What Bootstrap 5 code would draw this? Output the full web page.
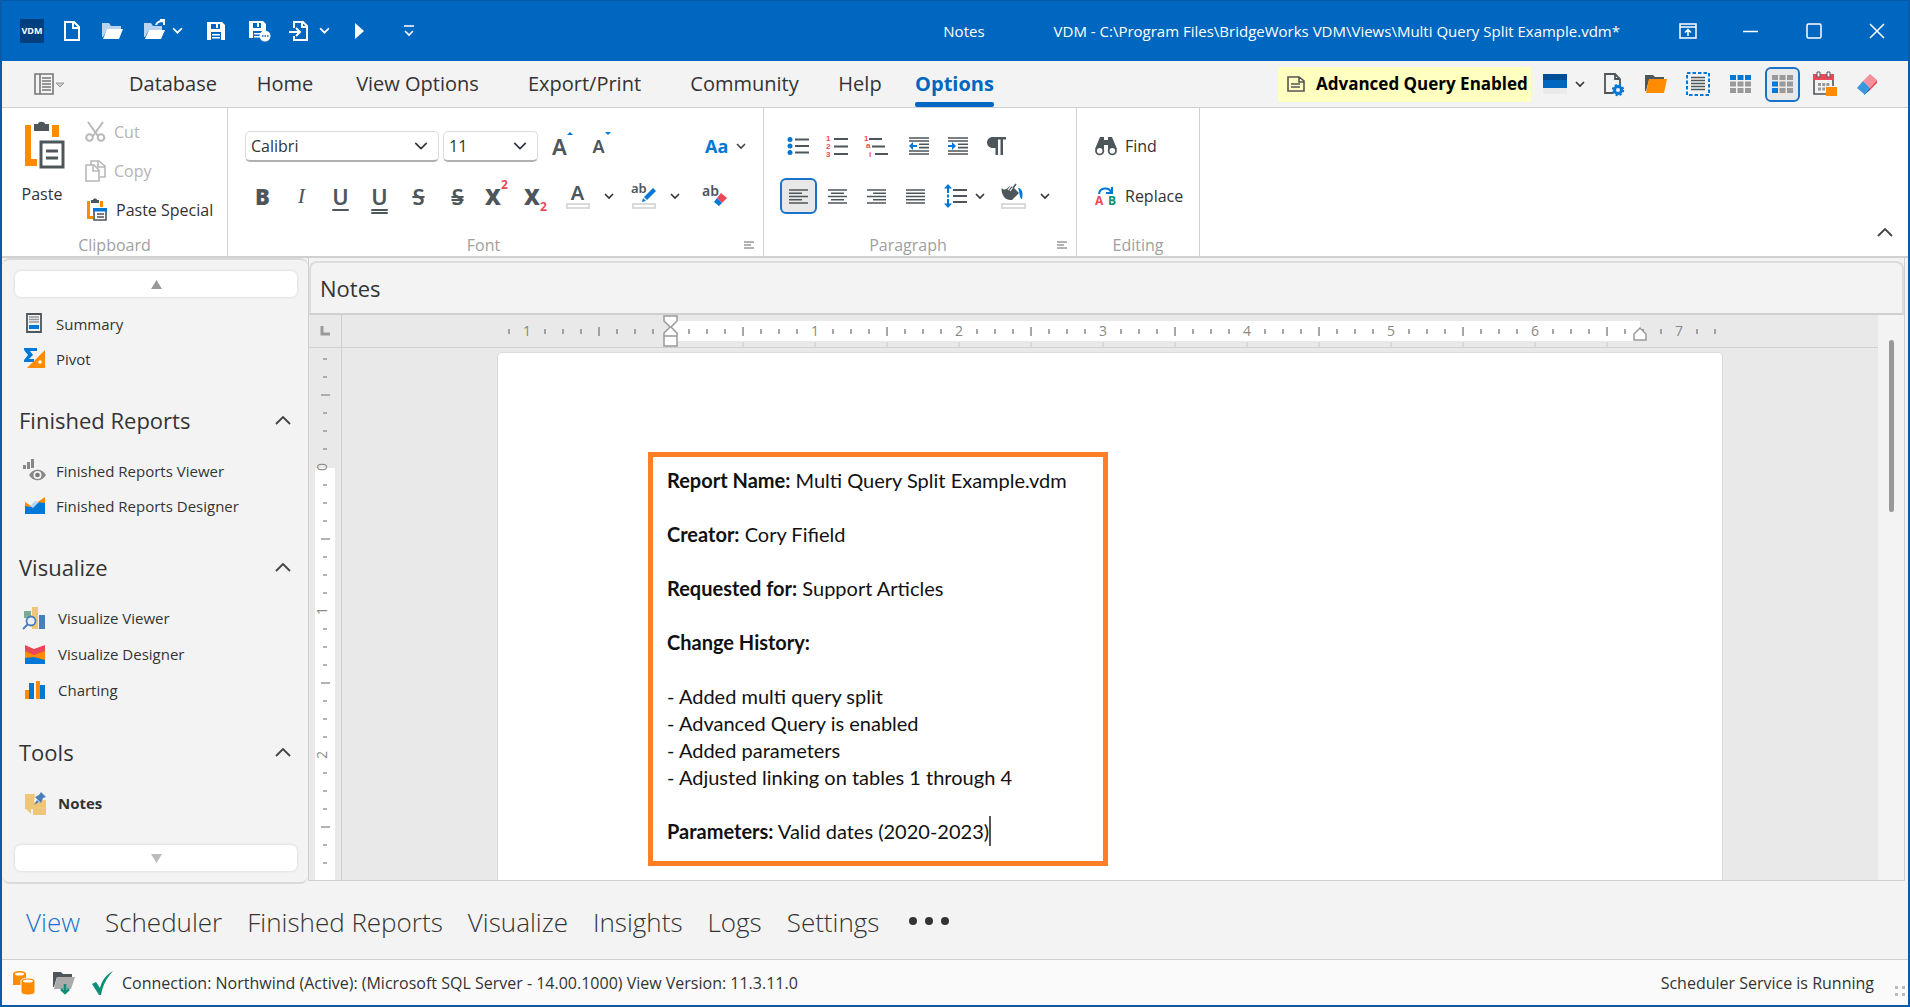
<!DOCTYPE html>
<html lang="en">
<head>
<meta charset="utf-8">
<meta name="viewport" content="width=device-width, initial-scale=1">
<title>VDM - Notes</title>
<link href="https://cdn.jsdelivr.net/npm/bootstrap@5.3.0/dist/css/bootstrap.min.css" rel="stylesheet">
<style>
:root{--vdm-blue:#0067c0;--edge:#d0d0d0;--ink:#333;--steel:#4d565b;--red:#ec4758;--azure:#0078d7;--orange:#ff8c00}
body{font-family:"Open Sans","Noto Sans",sans-serif;font-size:16px;line-height:20px;color:var(--ink);background:#f3f3f3}
svg{display:block;flex:none;overflow:visible}
button{font:inherit;color:inherit;background:none;border:0;padding:0}
a{color:inherit;text-decoration:none}
.app-frame{border:2px solid #0a5ca8;border-top:0}
/* title bar */
.title-strip{height:61px;background:var(--vdm-blue);color:#fff;border-top:1px solid #005aa8;padding-left:18px}
.logo-box{width:24px;height:24px;background:#003e7e;font-size:9px;font-weight:700}
.new-btn{width:36px}
.win-btn{width:63px;display:flex;justify-content:center}
.tab-caption{margin-right:69px;font-size:15px}
.doc-caption{margin-right:36px;font-size:15px}
/* ribbon tabs */
.tab-strip{height:47px;border-bottom:1px solid var(--edge)}
.file-btn{width:107px;padding-left:32px}
.ribbon-tabs a{font-size:20px;line-height:28px;width:128px;height:46px;position:relative}
.ribbon-tabs a:nth-child(2){width:96px}
.ribbon-tabs a:nth-child(3){width:169px}
.ribbon-tabs a:nth-child(4){width:165px}
.ribbon-tabs a:nth-child(5){width:155px}
.ribbon-tabs a:nth-child(6){width:76px}
.ribbon-tabs a:nth-child(7){width:113px}
.ribbon-tabs a.active{color:var(--vdm-blue);font-weight:700}
.ribbon-tabs a.active::after{content:"";position:absolute;left:17px;right:17px;bottom:0;height:5px;border-radius:2px;background:var(--vdm-blue)}
.query-flag{background:#ffffc0;height:35px;width:253px;padding-left:9px;gap:11px;color:#000;font-weight:700;font-size:17px}
.quick-btn{width:42px;height:35px}
.quick-btn.pressed{width:35px;margin:0 4px}
.pressed{border:2px solid #1a73c8;border-radius:6px;background:#e8e8e8}
/* ribbon groups */
.ribbon-bar{height:150px;background:#fff;border-bottom:2px solid var(--edge)}
.ribbon-group{border-right:1px solid var(--edge)}
.grp-clip{width:226px}
.grp-font{width:536px}
.grp-para{width:313px}
.grp-edit{width:123px}
.group-name{height:21px;color:#a0a0a0;position:relative}
.group-name svg{position:absolute;right:9px;top:6px}
.wide-name{padding-right:24px}
.muted-cmd{color:#b4b4b4}
.paste-btn{width:64px;padding:10px 0 0 2px}
.paste-btn svg{margin-left:20px}
.paste-btn span{margin:12px 0 0 14px}
.clip-list{padding:4px 0 0 19px}
.clip-cmd{height:39px;gap:8px}
.font-rows{padding:19px 0 0 15px}
.para-rows{padding:19px 0 0 14px}
.edit-rows{padding:19px 0 0 18px}
.font-line{height:38px}
.second-line{height:36px;margin-top:13px}
.ribbon-select{height:31px;border:1px solid #dcdcdc;border-bottom:2px solid #b0b0b0;border-radius:5px;font-size:16px;line-height:20px;padding:3px 30px 3px 5px;background-position:right 10px center;background-size:14px 14px;color:var(--ink);box-shadow:none}
.font-pick{width:194px;margin-left:2px}
.size-pick{width:95px;margin:0 5px 0 4px}
.slot{width:39px;height:36px;display:flex;align-items:center;justify-content:center;color:var(--steel);font-size:22px;line-height:28px}
.slot-chev{width:24px;height:36px;display:flex;align-items:center;justify-content:center}
.slot.pressed{width:37px;margin:0 1px 0 2px}
.slot.small-a{font-size:18px}
.slot.color-a{line-height:20px;font-size:20px}
.face{font-family:"Noto Sans",sans-serif;font-weight:600}
.italic-face{font-family:"Liberation Serif",serif}
.case-btn{color:var(--azure);font-size:18px;line-height:26px;margin-left:84px}
.case-btn svg{color:#444}
.split-gap{margin-left:3px}
.script-num{color:var(--red);font-size:12px;line-height:14px;font-weight:700}
.u1,.u2{text-underline-offset:4px;text-decoration:underline 2px}
.u2{text-decoration-style:double}
.s2{text-decoration:line-through double}
.swatch-under{display:block;width:24px;height:6px;border:2px solid #d9dbdb}
.spacing-btn{margin-left:9px;margin-right:9px;height:36px}
.collapse-btn{margin:0 15px 19px 0}
/* side navigation */
.work-area,.doc-pane,.doc-body,.doc-main{min-height:0;min-width:0}
.side-pane{width:306px;border:2px solid #dadada;border-left:0;border-right:0;border-radius:8px}
.scroll-btn{height:26px;margin:0 11px 0 13px;background:#fff;border-radius:6px;box-shadow:0 0 3px #d0d0d0}
.upper-btn{margin-top:11px}
.lower-btn{margin-top:auto;margin-bottom:11px}
.side-list{padding-top:9px;font-size:15px}
.side-head{display:flex;width:272px;height:40px;margin:24px 0 13px 17px;font-size:22px;line-height:32px}
.side-link{height:35px;padding-left:21px;gap:10px}
.side-link svg{width:23px;height:23px}
.side-roomy .side-link{height:36px;gap:12px}
/* document */
.doc-pane{border:1px solid var(--edge);border-top:0;margin-right:3px;margin-bottom:3px}
.doc-title{height:54px;margin:3px 0 0;border:2px solid #dcdcdc;border-bottom:2px solid var(--edge);border-radius:8px 8px 0 0;font-size:22px;line-height:32px;padding-left:9px}
.ruler-corner{width:33px;height:33px;border-right:1px solid var(--edge);border-bottom:1px solid var(--edge)}
.h-ruler{height:33px;border-bottom:1px solid var(--edge)}
.v-ruler{width:33px;border-right:1px solid var(--edge)}
.canvas-bg{background:#e9e9e9}
.sheet{width:1226px;margin-top:4px;background:#fff;border:1px solid #dadada;border-bottom:0;border-radius:5px 5px 0 0;padding:99px 0 0 150px}
.note-frame{width:460px;border:5px solid #ff7f27;padding:10px 14px 16px;font-family:Lato,"Liberation Sans",sans-serif;font-size:20px;line-height:27px;color:#111}
.note-frame p{margin:0;min-height:27px}
.caret-line{border-left:2px solid #555;padding:3px 0}
.scroll-lane{width:26px;background:#f3f3f3;padding:25px 0 0 11px}
.scroll-thumb{width:5px;height:172px;border-radius:3px;background:#999}
/* bottom bars */
.module-bar{height:76px;border-bottom:1px solid var(--edge);padding-left:24px;gap:25px;font-weight:300;font-size:26px;line-height:38px}
.module-bar .current{color:#1a73d0}
.status-strip{height:45px;background:#fafafa;padding:0 2px 0 11px}
</style>
<script src="https://cdn.jsdelivr.net/npm/bootstrap@5.3.0/dist/js/bootstrap.bundle.min.js"></script>
</head>
<body>
<svg width="0" height="0" class="position-absolute" aria-hidden="true">
<symbol id="chev" viewBox="0 0 10 7"><path d="M1 1l4 4 4-4" fill="none" stroke="currentColor" stroke-width="1.6"/></symbol>
<symbol id="chev-up" viewBox="0 0 16 9"><path d="M1 8l7-7 7 7" fill="none" stroke="#444" stroke-width="1.8"/></symbol>
<symbol id="launcher" viewBox="0 0 10 8"><path d="M0 1h10M0 4h7M0 7h10" stroke="#999" stroke-width="1.5"/></symbol>
</svg>
<div class="app-frame vh-100 d-flex flex-column overflow-hidden">

<header class="title-strip d-flex align-items-center flex-shrink-0">
  <div class="logo-box d-flex align-items-center justify-content-center">VDM</div>
  <button class="ms-3 new-btn" aria-label="New"><svg width="24" height="20" viewBox="0 0 24 20"><path d="M5 1h9l5 5v13H5zM13 1v6h6" fill="none" stroke="#fff" stroke-width="2"/></svg></button>
  <button aria-label="Open" class="ms-1"><svg width="26" height="20" viewBox="0 0 26 20"><path d="M2 2h7l2 3h10v4H7L3 16H2z" fill="#b9d4ef"/><path d="M7 8h16l-4 10H3z" fill="#fff"/></svg></button>
  <button aria-label="Open recent" class="d-flex align-items-center gap-1 ms-3"><svg width="26" height="24" viewBox="0 0 26 24"><path d="M2 4h7l2 3h9v4H7L3 18H2z" fill="#b9d4ef"/><path d="M7 11h16l-4 9H3z" fill="#fff"/><path d="M14 6c1-3 4-4 7-4M18 1h4v5" fill="none" stroke="#fff" stroke-width="2"/></svg><svg width="11" height="8"><use href="#chev"/></svg></button>
  <button aria-label="Save" class="ms-4"><svg width="18" height="18" viewBox="0 0 18 18"><path d="M0 0h15l3 3v15H0z" fill="#fff"/><path d="M4 2h9v5H4zM4 10h10v8H4z" fill="#0067c0"/><path d="M9 2h2v4H9zM5 12h8v1.500H5zM5 15h8v1.500H5z" fill="#fff"/></svg></button>
  <button aria-label="Save as" class="ms-4"><svg width="22" height="22" viewBox="0 0 22 22"><path d="M0 1h14l3 3v14H0z" fill="#fff"/><path d="M4 3h8v5H4zM4 11h9v8H4z" fill="#0067c0"/><path d="M8 3h2v4H8zM5 13h7v1.500H5zM5 16h6v1.500H5z" fill="#fff"/><circle cx="16" cy="16" r="5.500" fill="#fff"/><path d="M13 16h1.500M15.500 16H17M18 16h1.500" stroke="#0067c0" stroke-width="1.500"/></svg></button>
  <button aria-label="Export" class="d-flex align-items-center gap-2 ms-3"><svg width="24" height="20" viewBox="0 0 24 20"><path d="M7 7V1h9l4 4v14H7v-4M15 1v5h5M2 11h10M9 7l4 4-4 4" fill="none" stroke="#fff" stroke-width="1.900"/></svg><svg width="11" height="8"><use href="#chev"/></svg></button>
  <button aria-label="Run" class="ms-4"><svg width="14" height="20" viewBox="0 0 14 20"><path d="M1 2l9 8-9 8z" fill="#fff"/></svg></button>
  <button aria-label="Customize" class="ms-4 ps-2"><svg class="ms-1" width="10" height="12" viewBox="0 0 10 12"><path d="M0 1h10M1 6l4 4 4-4" fill="none" stroke="#fff" stroke-width="1.600"/></svg></button>
  <div class="ms-auto d-flex align-items-center">
    <span class="tab-caption">Notes</span>
    <span class="doc-caption text-nowrap">VDM - C:\Program Files\BridgeWorks VDM\Views\Multi Query Split Example.vdm*</span>
    <button aria-label="Pin ribbon" class="win-btn"><svg width="18" height="16" viewBox="0 0 18 16"><path d="M1 1h16v14H1zM1 4h16M9 13V7M6 9.500L9 6.500l3 3" fill="none" stroke="#fff" stroke-width="1.500"/></svg></button>
    <button aria-label="Minimize" class="win-btn"><svg width="16" height="16"><path d="M0 8.500h15" stroke="#fff" stroke-width="1.500"/></svg></button>
    <button aria-label="Maximize" class="win-btn"><svg width="16" height="16"><rect x="1" y="1" width="14" height="14" rx="1.500" fill="none" stroke="#fff" stroke-width="1.500"/></svg></button>
    <button aria-label="Close" class="win-btn"><svg width="16" height="16"><path d="M1 1l14 14M15 1L1 15" stroke="#fff" stroke-width="1.500"/></svg></button>
  </div>
</header>

<div class="tab-strip d-flex align-items-center flex-shrink-0">
  <button class="file-btn d-flex align-items-center" aria-label="File menu"><svg width="32" height="22" viewBox="0 0 32 22"><path d="M1 1h18v20H1zM6 1v20" fill="none" stroke="#777" stroke-width="1.600"/><path d="M8 5h9M8 8h9M8 11h9M8 14h9M8 17h9" stroke="#777" stroke-width="1.400"/><path d="M22 10h8l-4 4z" fill="#ccc" stroke="#999"/></svg></button>
  <nav class="ribbon-tabs d-flex text-nowrap">
    <a href="#" class="d-flex align-items-center justify-content-center">Database</a><a href="#" class="d-flex align-items-center justify-content-center">Home</a><a href="#" class="d-flex align-items-center justify-content-center">View Options</a><a href="#" class="d-flex align-items-center justify-content-center">Export/Print</a><a href="#" class="d-flex align-items-center justify-content-center">Community</a><a href="#" class="d-flex align-items-center justify-content-center">Help</a><a href="#" class="active d-flex align-items-center justify-content-center">Options</a>
  </nav>
  <div class="ms-auto d-flex align-items-center pe-3 me-1">
    <button class="query-flag d-flex align-items-center text-nowrap"><svg width="18" height="16" viewBox="0 0 18 16"><path d="M1 1h11l5 4v10H1zM12 1v5h5M4 8h9M4 11h9" fill="none" stroke="#555" stroke-width="1.600"/></svg>Advanced Query Enabled</button>
    <button class="d-flex align-items-center gap-2 ms-2 ps-1 me-2" aria-label="Skin"><svg width="24" height="22" viewBox="0 0 24 22"><path d="M0 1h24v7H0z" fill="#004e98"/><path d="M0 7h24v8H0z" fill="#0067c0"/><path d="M0 15h24v6H0z" fill="#eaeaea"/></svg><svg width="10" height="7"><use href="#chev"/></svg></button>
    <button class="quick-btn d-flex align-items-center justify-content-center" aria-label="Page setup"><svg width="22" height="24" viewBox="0 0 22 24"><path d="M10 21H2V2h10l5 5v6M12 2v5h5" fill="none" stroke="#4d565b" stroke-width="1.800"/><circle cx="15" cy="18" r="3.500" fill="none" stroke="#0078d7" stroke-width="3"/><circle cx="15" cy="18" r="5.300" fill="none" stroke="#0078d7" stroke-width="1.800" stroke-dasharray="2.200 2"/></svg></button>
    <button class="quick-btn d-flex align-items-center justify-content-center" aria-label="Folder"><svg width="22" height="20" viewBox="0 0 22 20"><path d="M0 1h8l2 2h9v3H4L1 17H0z" fill="#4d565b"/><path d="M4 5h18l-3 14H1z" fill="#ff8c00"/></svg></button>
    <button class="quick-btn d-flex align-items-center justify-content-center" aria-label="Select"><svg width="24" height="24" viewBox="0 0 24 24"><rect x="1" y="1" width="22" height="22" fill="none" stroke="#0078d7" stroke-width="2" stroke-dasharray="3.500 2"/><path d="M5 5.500h14M5 8.500h14M5 11.500h14M5 14.500h14M5 17.500h14" stroke="#4d565b" stroke-width="1.700"/></svg></button>
    <button class="quick-btn d-flex align-items-center justify-content-center" aria-label="Header row"><svg width="21" height="18" viewBox="0 0 21 18"><path d="M0 0h6v5H0zM7.500 0h6v5h-6zM15 0h6v5h-6z" fill="#0078d7"/><path d="M0 6.500h6v5H0zM7.500 6.500h6v5h-6zM15 6.500h6v5h-6zM0 13h6v5H0zM7.500 13h6v5h-6zM15 13h6v5h-6z" fill="#999"/></svg></button>
    <button class="quick-btn pressed d-flex align-items-center justify-content-center" aria-label="Header column"><svg width="21" height="18" viewBox="0 0 21 18"><path d="M0 6.500h6v5H0zM0 13h6v5H0z" fill="#0078d7"/><path d="M0 0h6v5H0zM7.500 0h6v5h-6zM15 0h6v5h-6zM7.500 6.500h6v5h-6zM15 6.500h6v5h-6zM7.500 13h6v5h-6zM15 13h6v5h-6z" fill="#999"/></svg></button>
    <button class="quick-btn d-flex align-items-center justify-content-center" aria-label="Calendar"><svg width="24" height="24" viewBox="0 0 24 24"><path d="M0 2h21v6H0z" fill="#ec4758"/><path d="M4 0h3v5H4zM14 0h3v5h-3z" fill="#fff" stroke="#4d565b"/><path d="M1 8v14h13M20 8v6" fill="none" stroke="#4d565b" stroke-width="1.600"/><path d="M5 12.500h12M5 17h7" stroke="#999" stroke-width="3" stroke-dasharray="3 1.200"/><path d="M13 15h11v9H13z" fill="#ff8c00"/></svg></button>
    <button class="quick-btn d-flex align-items-center justify-content-center" aria-label="Clear"><svg width="22" height="22" viewBox="0 0 22 22"><path d="M14 1l7 6-7 8-7-7z" fill="#f2929b"/><path d="M7 8l7 7-6 6-7-6z" fill="#3a96dd"/><path d="M21 7v3l-7 7v-2z" fill="#ec4758"/><path d="M14 15v2l-6 5v-1z" fill="#0063b1"/></svg></button>
  </div>
</div>

<section class="ribbon-bar d-flex flex-shrink-0">
  <div class="ribbon-group grp-clip d-flex flex-column">
    <div class="d-flex flex-fill">
      <button class="d-flex flex-column align-items-center flex-shrink-0 paste-btn">
        <svg width="44" height="54" viewBox="0 0 44 54"><path d="M2 7h6v34h6v7H2zM29 7h7v12h-7z" fill="#ff8c00"/><path d="M11 6h4c0-3 7-3 7 0h4v7H11z" fill="#4d565b"/><path d="M18 24h22v25H18zM23 33h12M23 40h12" fill="#fff" stroke="#4d565b" stroke-width="3"/></svg>
        <span>Paste</span></button>
      <div class="clip-list">
        <button class="clip-cmd muted-cmd d-flex align-items-center" disabled><svg width="21" height="20" viewBox="0 0 21 20"><path d="M3 0l10 14M18 0L8 14" stroke="#b8b8b8" stroke-width="2"/><circle cx="4.500" cy="15.500" r="3.300" fill="none" stroke="#b8b8b8" stroke-width="2"/><circle cx="16" cy="15.500" r="3.300" fill="none" stroke="#b8b8b8" stroke-width="2"/></svg>Cut</button>
        <button class="clip-cmd muted-cmd d-flex align-items-center" disabled><svg width="21" height="22" viewBox="0 0 21 22"><path d="M6 5V1h8l6 5v11h-5M13 1v6h7" fill="none" stroke="#b8b8b8" stroke-width="1.600"/><path d="M1 5h8l5 5v11H1zM8 5v6h6" fill="#fff" stroke="#b8b8b8" stroke-width="1.600"/></svg>Copy</button>
        <button class="clip-cmd d-flex align-items-center text-nowrap"><svg width="23" height="22" viewBox="0 0 23 22"><path d="M2 2h3v15h3v3H2zM15 2h3v6h-3z" fill="#ff8c00"/><path d="M6 1h2c0-2 4-2 4 0h2v3H6z" fill="#4d565b"/><path d="M9 10h12v11H9zM12 15h7M12 18h7" fill="#fff" stroke="#4d565b" stroke-width="1.600"/><path d="M8 9h14v3.500H8z" fill="#0078d7"/></svg>Paste Special</button>
      </div>
    </div>
    <div class="group-name text-center">Clipboard</div>
  </div>
  <div class="ribbon-group grp-font d-flex flex-column">
    <div class="flex-fill font-rows">
      <div class="d-flex align-items-center font-line">
        <select class="form-select ribbon-select font-pick" aria-label="Font"><option>Calibri</option></select>
        <select class="form-select ribbon-select size-pick" aria-label="Font size"><option>11</option></select>
        <button class="slot face" aria-label="Grow font"><span>A</span><svg class="align-self-start mt-1" width="6" height="3"><path d="M0 3l3-3 3 3z" fill="#0078d7"/></svg></button>
        <button class="slot face small-a" aria-label="Shrink font"><span>A</span><svg class="align-self-start mt-1" width="6" height="3"><path d="M0 0l3 3 3-3z" fill="#0078d7"/></svg></button>
        <button class="case-btn d-flex align-items-center gap-2" aria-label="Change case"><b>Aa</b><svg width="10" height="7"><use href="#chev"/></svg></button>
      </div>
      <div class="d-flex align-items-center second-line">
        <button class="slot face"><b>B</b></button>
        <button class="slot italic-face"><i>I</i></button>
        <button class="slot face"><span class="u1">U</span></button>
        <button class="slot face"><span class="u2">U</span></button>
        <button class="slot face"><s>S</s></button>
        <button class="slot face"><s class="s2">S</s></button>
        <button class="slot face"><b>X</b><span class="script-num align-self-start">2</span></button>
        <button class="slot face"><b>X</b><span class="script-num align-self-end">2</span></button>
        <button class="slot face flex-column split-gap color-a" aria-label="Font color"><span>A</span><span class="swatch-under"></span></button>
        <button class="slot-chev" aria-label="Font color menu"><svg width="10" height="7"><use href="#chev"/></svg></button>
        <button class="slot split-gap" aria-label="Highlight"><svg width="26" height="28" viewBox="0 0 26 28"><text x="0" y="11" font-family="Noto Sans" font-weight="600" font-size="13" fill="#4d565b">ab</text><path d="M22 6l3 3-9 9-3-3z" fill="#0078d7"/><path d="M12 16l3 3-4 1z" fill="#0078d7"/><path d="M2 22h22v4H2z" fill="#fff" stroke="#d9dbdb" stroke-width="2"/></svg></button>
        <button class="slot-chev" aria-label="Highlight menu"><svg width="10" height="7"><use href="#chev"/></svg></button>
        <button class="slot ms-2" aria-label="Clear formatting"><svg width="26" height="24" viewBox="0 0 26 24"><text x="0" y="12" font-family="Noto Sans" font-weight="600" font-size="14" fill="#4d565b">ab</text><path d="M19 9l6 5-5 5-5-5z" fill="#ec4758"/><path d="M15 14l5 5-3 3-5-4z" fill="#0078d7"/></svg></button>
      </div>
    </div>
    <div class="group-name wide-name text-center">Font<svg width="10" height="8"><use href="#launcher"/></svg></div>
  </div>
  <div class="ribbon-group grp-para d-flex flex-column">
    <div class="flex-fill para-rows">
      <div class="d-flex align-items-center font-line">
        <button class="slot" aria-label="Bullets"><svg width="22" height="18" viewBox="0 0 22 18"><g fill="#0078d7"><circle cx="3" cy="2.500" r="2.500"/><circle cx="3" cy="9" r="2.500"/><circle cx="3" cy="15.500" r="2.500"/></g><path d="M8 2.500h14M8 9h14M8 15.500h14" stroke="#4d565b" stroke-width="1.800"/></svg></button>
        <button class="slot" aria-label="Numbering"><svg width="22" height="22" viewBox="0 0 22 22"><g font-family="Liberation Sans" font-weight="700" font-size="8" fill="#ec4758"><text x="0" y="6">1</text><text x="0" y="14">2</text><text x="0" y="22">3</text></g><path d="M8 4h14M8 11.500h14M8 19h14" stroke="#4d565b" stroke-width="1.800"/></svg></button>
        <button class="slot" aria-label="Multilevel list"><svg width="24" height="22" viewBox="0 0 24 22"><g font-family="Liberation Sans" font-weight="700" font-size="8" fill="#ec4758"><text x="0" y="6">1</text><text x="2" y="13">a</text><text x="5" y="22">i</text></g><path d="M5 4h13M8 11.500h13M11 19h13" stroke="#4d565b" stroke-width="1.800"/></svg></button>
        <button class="slot ms-1" aria-label="Decrease indent"><svg width="20" height="18" viewBox="0 0 20 18"><path d="M0 1h20M0 4h20M10 7.300h10M10 10.600h10M0 14h20M0 17h20" stroke="#4d565b" stroke-width="1.600"/><path d="M0 9l4-4v3h4v2H4v3z" fill="#0078d7"/></svg></button>
        <button class="slot" aria-label="Increase indent"><svg width="20" height="18" viewBox="0 0 20 18"><path d="M0 1h20M0 4h20M10 7.300h10M10 10.600h10M0 14h20M0 17h20" stroke="#4d565b" stroke-width="1.600"/><path d="M8 9L4 5v3H0v2h4v3z" fill="#0078d7"/></svg></button>
        <button class="slot" aria-label="Show marks"><svg width="20" height="18" viewBox="0 0 20 18"><path d="M6 0h13v2.500h-3V18h-2.500V2.500H11V18H8.500v-7H6C-2 11-2 0 6 0z" fill="#4d565b"/></svg></button>
      </div>
      <div class="d-flex align-items-center second-line">
        <button class="slot pressed" aria-label="Align left"><svg width="19" height="15" viewBox="0 0 19 15"><path d="M0 1h19M0 4.250h13M0 7.500h19M0 10.750h13M0 14h19" stroke="#4d565b" stroke-width="1.700"/></svg></button>
        <button class="slot" aria-label="Center"><svg width="19" height="15" viewBox="0 0 19 15"><path d="M0 1h19M3 4.250h13M0 7.500h19M3 10.750h13M0 14h19" stroke="#4d565b" stroke-width="1.700"/></svg></button>
        <button class="slot" aria-label="Align right"><svg width="19" height="15" viewBox="0 0 19 15"><path d="M0 1h19M6 4.250h13M0 7.500h19M6 10.750h13M0 14h19" stroke="#4d565b" stroke-width="1.700"/></svg></button>
        <button class="slot" aria-label="Justify"><svg width="19" height="15" viewBox="0 0 19 15"><path d="M0 1h19M0 4.250h19M0 7.500h19M0 10.750h19M0 14h19" stroke="#4d565b" stroke-width="1.700"/></svg></button>
        <button class="d-flex align-items-center gap-2 spacing-btn" aria-label="Line spacing"><svg width="23" height="24" viewBox="0 0 23 24"><path d="M4 0l4 4.500H5V9H3V4.500H0zM4 24l4-4.500H5V15H3v4.500H0z" fill="#0078d7"/><path d="M3 10.500h2v3H3z" fill="#0078d7"/><path d="M9 6h14M9 12h14M9 18h14" stroke="#4d565b" stroke-width="1.800"/></svg><svg width="10" height="7"><use href="#chev"/></svg></button>
        <button class="slot" aria-label="Shading"><svg width="25" height="26" viewBox="0 0 25 26"><path d="M1 5c2 3 5 1 8-2l3 1 6 6-7 7c-5 0-8-2-9-5C1 10 0 7 1 5z" fill="#4d565b"/><path d="M15 0L9 8M10 3l-3 4" stroke="#fff" stroke-width="1.200"/><path d="M15 1l-3 4" stroke="#4d565b" stroke-width="1.600"/><path d="M17 5c5 0 5 7 4 11-3-1-2-7-4-11z" fill="#0078d7"/><path d="M1 21h23v4H1z" fill="#fff" stroke="#d9dbdb" stroke-width="2"/></svg></button>
        <button class="slot-chev" aria-label="Shading menu"><svg width="10" height="7"><use href="#chev"/></svg></button>
      </div>
    </div>
    <div class="group-name wide-name text-center">Paragraph<svg width="10" height="8"><use href="#launcher"/></svg></div>
  </div>
  <div class="ribbon-group grp-edit d-flex flex-column">
    <div class="flex-fill edit-rows">
      <div class="font-line d-flex align-items-center"><button class="d-flex align-items-center gap-2"><svg width="22" height="20" viewBox="0 0 22 20"><path d="M5 1h4v3h4V1h4l5 12h-9V9H9v4H0z" fill="#4d565b"/><circle cx="4.700" cy="14.700" r="3.700" fill="#fff" stroke="#4d565b" stroke-width="1.800"/><circle cx="17.300" cy="14.700" r="3.700" fill="#fff" stroke="#4d565b" stroke-width="1.800"/></svg>Find</button></div>
      <div class="second-line d-flex align-items-center"><button class="d-flex align-items-center gap-2"><svg width="22" height="20" viewBox="0 0 22 20"><g font-family="Open Sans" font-weight="700" font-size="12"><text x="0" y="19" fill="#ec4758">A</text><text x="13" y="19" fill="#0b8f76">B</text></g><path d="M4 8c1-7 10-7 12-2M17 1v6h-6" fill="none" stroke="#0078d7" stroke-width="2"/></svg>Replace</button></div>
    </div>
    <div class="group-name text-center">Editing</div>
  </div>
  <button class="ms-auto align-self-end collapse-btn" aria-label="Collapse ribbon"><svg width="16" height="9"><use href="#chev-up"/></svg></button>
</section>

<main class="work-area d-flex flex-fill overflow-hidden">
  <aside class="side-pane d-flex flex-column flex-shrink-0">
    <button class="scroll-btn upper-btn d-flex align-items-center justify-content-center flex-shrink-0" aria-label="Scroll up"><svg width="11" height="9"><path d="M0 9L5.500 0 11 9z" fill="#999"/></svg></button>
    <nav class="side-list">
      <a href="#" class="side-link d-flex align-items-center"><svg viewBox="0 0 23 23"><path d="M4 2h14v18H4z" fill="#f3f3f3" stroke="#4d565b" stroke-width="1.800"/><path d="M6 5h10M6 7.500h10M6 10h10" stroke="#999" stroke-width="1.400"/><path d="M6 13h10v4H6z" fill="#0078d7"/></svg>Summary</a>
      <a href="#" class="side-link d-flex align-items-center"><svg viewBox="0 0 23 23"><path d="M1 1h13v3H7l3 4-4 4h5v3H1v-2l4-5-4-5z" fill="#0078d7"/><path d="M22 3v18H4z" fill="#ff8c00"/><circle cx="17" cy="15" r="1.800" fill="#fff"/></svg>Pivot</a>
      <button class="side-head align-items-center justify-content-between">Finished Reports<svg width="16" height="9"><use href="#chev-up"/></svg></button>
      <a href="#" class="side-link d-flex align-items-center"><svg viewBox="0 0 23 23"><path d="M0 6h3v4H0zM4 3h3v7H4zM8 0h3v9H8z" fill="#888"/><path d="M6 16c4-7 13-7 17 0-4 7-13 7-17 0z" fill="#888"/><circle cx="14.500" cy="16" r="4" fill="#f3f3f3"/><circle cx="14.500" cy="16" r="2.300" fill="#777"/></svg>Finished Reports Viewer</a>
      <a href="#" class="side-link d-flex align-items-center"><svg viewBox="0 0 23 23"><path d="M2 8l6 4 8-5 6-4v14H2z" fill="#ff8c00"/><path d="M2 12l5 1 6-5 9 1v11H2z" fill="#0078d7"/><path d="M7 12l5-5 4 1-6 6z" fill="#b5d5f0"/></svg>Finished Reports Designer</a>
      <button class="side-head align-items-center justify-content-between">Visualize<svg width="16" height="9"><use href="#chev-up"/></svg></button>
      <div class="side-roomy">
      <a href="#" class="side-link d-flex align-items-center"><svg viewBox="0 0 23 23"><path d="M1 4h7v7H1z" fill="#7aab93"/><path d="M9 0h6v22H9z" fill="#edc777"/><path d="M16 8h6v14h-6z" fill="#4a7ebb"/><circle cx="8" cy="14" r="4.500" fill="#e9eff6" stroke="#4a7ebb" stroke-width="1.800"/><path d="M5 17l-5 5" stroke="#4a7ebb" stroke-width="2"/></svg>Visualize Viewer</a>
      <a href="#" class="side-link d-flex align-items-center"><svg viewBox="0 0 23 23"><path d="M2 2l9 4 11-4v8l-10 3L2 10z" fill="#ec4758"/><path d="M2 8l9 4 11-4v10H2z" fill="#ff8c00"/><path d="M2 15l9-1 11 3v4H2z" fill="#0078d7"/></svg>Visualize Designer</a>
      <a href="#" class="side-link d-flex align-items-center"><svg viewBox="0 0 23 23"><path d="M2 11h4v9H2zM13 2h4v18h-4z" fill="#ff8c00"/><path d="M6 4h5v16H6zM17 6h5v14h-5z" fill="#0078d7"/></svg>Charting</a>
      <button class="side-head align-items-center justify-content-between">Tools<svg width="16" height="9"><use href="#chev-up"/></svg></button>
      <a href="#" class="side-link d-flex align-items-center fw-bold"><svg viewBox="0 0 23 23"><path d="M2 2h10l-1 8 6 0 2-2h4v15H10v-6H2z" fill="#edc777"/><path d="M3 17h5v5z" fill="#edc777"/><path d="M18 0l5 5-3 1-2 5-6-6 4-2zM14 8l2 2-5 3z" fill="#4a7ebb"/></svg>Notes</a>
      </div>
    </nav>
    <button class="scroll-btn lower-btn d-flex align-items-center justify-content-center flex-shrink-0" aria-label="Scroll down"><svg width="11" height="9"><path d="M0 0h11L5.500 9z" fill="#bbb"/></svg></button>
  </aside>
  <section class="doc-pane d-flex flex-column flex-fill">
    <h1 class="doc-title d-flex align-items-center flex-shrink-0 fw-normal">Notes</h1>
    <div class="doc-body d-flex flex-fill canvas-bg">
      <div class="doc-main d-flex flex-column flex-fill">
        <div class="d-flex flex-shrink-0">
          <div class="ruler-corner d-flex align-items-center justify-content-center flex-shrink-0"><svg width="10" height="10"><path d="M2 0v8h8" fill="none" stroke="#999" stroke-width="3"/></svg></div>
          <div class="h-ruler d-flex justify-content-center flex-fill"><svg id="across" width="1224" height="32"></svg></div>
        </div>
        <div class="d-flex flex-fill overflow-hidden">
          <div class="v-ruler flex-shrink-0"><svg id="down" width="32" height="533"></svg></div>
          <div class="d-flex justify-content-center flex-fill overflow-hidden">
            <article class="sheet flex-shrink-0">
              <div class="note-frame" contenteditable="true" spellcheck="false">
                <p><b>Report Name:</b> Multi Query Split Example.vdm</p><p></p>
                <p><b>Creator:</b> Cory Fifield</p><p></p>
                <p><b>Requested for:</b> Support Articles</p><p></p>
                <p><b>Change History:</b></p><p></p>
                <p>- Added multi query split</p>
                <p>- Advanced Query is enabled</p>
                <p>- Added parameters</p>
                <p>- Adjusted linking on tables 1 through 4</p><p></p>
                <p><b>Parameters:</b> Valid dates (2020-2023)<span class="caret-line"></span></p>
              </div>
            </article>
          </div>
        </div>
      </div>
      <div class="scroll-lane flex-shrink-0"><div class="scroll-thumb"></div></div>
    </div>
  </section>
</main>

<nav class="module-bar d-flex align-items-center flex-shrink-0 text-nowrap">
  <a href="#" class="current">View</a><a href="#">Scheduler</a><a href="#">Finished Reports</a><a href="#">Visualize</a><a href="#">Insights</a><a href="#">Logs</a><a href="#">Settings</a>
  <button class="ms-1" aria-label="More"><svg width="42" height="10"><g fill="#333"><circle cx="5" cy="4" r="4"/><circle cx="21" cy="4" r="4"/><circle cx="37" cy="4" r="4"/></g></svg></button>
</nav>
<footer class="status-strip d-flex align-items-center flex-shrink-0 text-nowrap">
  <svg width="23" height="24" viewBox="0 0 23 24"><g fill="#ff8c00"><path d="M0 3c0-4 13-4 13 0v11H0z"/><path d="M8 10c0-4 14-4 14 0v11c0 4-14 4-14 0z" stroke="#fafafa"/></g><ellipse cx="6.500" cy="3" rx="4.500" ry="1.500" fill="#fff"/><ellipse cx="15" cy="10" rx="5" ry="1.600" fill="#fff"/></svg>
  <svg class="ms-3" width="24" height="24" viewBox="0 0 24 24"><path d="M1 1h8l2 2h9v3H5L2 16H1z" fill="#4d565b"/><path d="M5 6h18l-4 12H2z" fill="#aaa"/><path d="M13 13v9M9 18l4 4 4-4" fill="none" stroke="#0b8f76" stroke-width="2.500"/></svg>
  <svg class="ms-3" width="22" height="24" viewBox="0 0 22 24"><path d="M0 13l4-2 4 6C10 9 14 4 21 0 14 8 11 14 9 24H7z" fill="#0b8f76"/></svg>
  <span class="ms-2">Connection: Northwind (Active): (Microsoft SQL Server - 14.00.1000) View Version: 11.3.11.0</span>
  <span class="ms-auto me-3 pe-1">Scheduler Service is Running</span>
  <svg class="align-self-end mb-2" width="12" height="12"><path d="M1 1h3v3H1zM8 1h3v3H8zM1 8h3v3H1zM8 8h3v3H8z" fill="#bbb"/></svg>
</footer>
</div>
<script>
// Rulers: one inch is 144px, divided in eighths.
const STEP=18,ZERO=173;
let h='<rect x="'+ZERO+'" y="6" width="969" height="20" fill="#fff"/>';
for(let i=-9;i<=58;i++){
  const x=ZERO+i*STEP;
  if(i===0)continue;
  if(i%8===0)h+='<text x="'+x+'" y="21" text-anchor="middle" font-size="14" fill="#888">'+Math.abs(i/8)+'</text>';
  else{const half=i%4===0;h+='<path d="M'+x+' '+(half?12:14)+'v'+(half?9:5)+'" stroke="#888" stroke-width="1.5"/>';}
  if(i>0&&i%4===0&&i<54)h+='<path d="M'+x+' 27v5" stroke="#ccc"/>';
}
h+='<path d="M166 1h13v5l-6 6 6 6v13h-13V18l6-6-6-6zM166 21h13" fill="#fff" stroke="#999" stroke-width="1.5"/>';
h+='<path d="M1136 25v-6l6-6 6 6v6z" fill="#fff" stroke="#999" stroke-width="1.5"/>';
document.getElementById('across').innerHTML=h;
let v='<rect x="6" y="120" width="20" height="500" fill="#fff"/>';
for(let i=-6;i<=23;i++){
  const y=119+i*STEP;
  if(i%8===0)v+='<text transform="translate(18 '+y+') rotate(-90)" text-anchor="middle" font-size="14" fill="#888">'+(i/8)+'</text>';
  else{const half=i%4===0;v+='<path d="M'+(half?12:14)+' '+y+'h'+(half?9:4)+'" stroke="#999" stroke-width="1.5"/>';}
}
document.getElementById('down').innerHTML=v;
</script>
</body>
</html>
